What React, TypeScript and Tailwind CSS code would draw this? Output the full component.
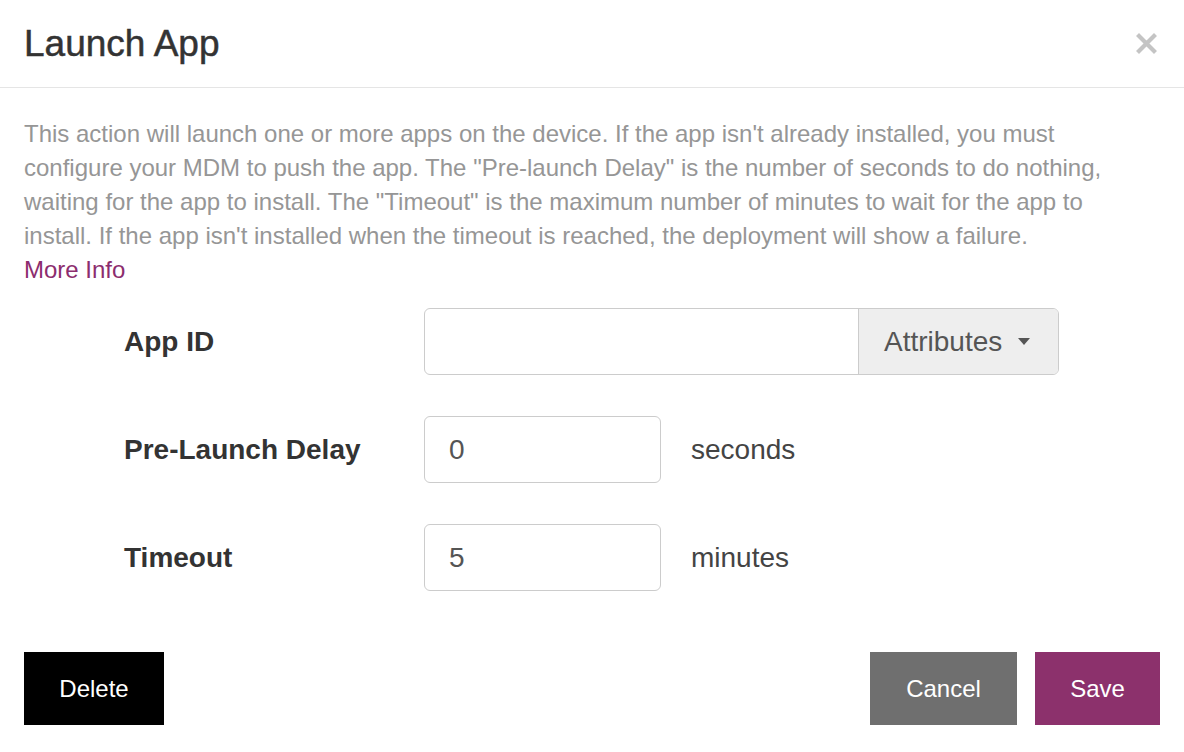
import React from 'react';

export default function App() {
  const font = { fontFamily: '"Liberation Sans", Arial, sans-serif' };

  const rows = [
    { label: 'Pre-Launch Delay', value: '0', unit: 'seconds' },
    { label: 'Timeout', value: '5', unit: 'minutes' },
  ];

  return (
    <div className="w-[1184px] h-[752px] bg-white flex flex-col" style={font}>
      {/* Header */}
      <header className="h-[88px] px-6 flex items-center justify-between border-b border-[#e5e5e5] shrink-0">
        <h1 className="text-[37px] leading-none text-[#333] pb-[1px] [-webkit-text-stroke:0.5px_#333]">Launch App</h1>
        <button className="w-[24px] h-[24px] mr-[2px] flex items-center justify-center">
          <svg width="21" height="21" viewBox="0 0 21 21">
            <path d="M3 3L18 18M18 3L3 18" stroke="#c4c4c4" strokeWidth="4.2" strokeLinecap="square" />
          </svg>
        </button>
      </header>

      {/* Body */}
      <main className="px-6 pt-[29px] flex-1 flex flex-col">
        <p className="text-[24px] leading-[34px] text-[#969696] whitespace-nowrap">
          This action will launch one or more apps on the device. If the app isn't already installed, you must
          <br />
          configure your MDM to push the app. The "Pre-launch Delay" is the number of seconds to do nothing,
          <br />
          waiting for the app to install. The "Timeout" is the maximum number of minutes to wait for the app to
          <br />
          install. If the app isn't installed when the timeout is reached, the deployment will show a failure.
          <br />
          <a className="text-[#8c2d6e]">More Info</a>
        </p>

        <div className="mt-[21px] flex flex-col gap-[41px]">
          <div className="flex items-center">
            <label className="w-[300px] pl-[100px] box-content text-[28px] font-bold text-[#333]">App ID</label>
            <div className="flex w-[635px] h-[67px] border border-[#ccc] rounded-[6px] overflow-hidden">
              <input className="flex-1 min-w-0 px-6 text-[28px] text-[#555] outline-none" style={font} />
              <div className="w-[200px] shrink-0 bg-[#eeeeee] border-l border-[#ccc] flex items-center pl-[25px] text-[28px] text-[#555]">
                Attributes
                <svg className="ml-[16px]" width="12" height="7" viewBox="0 0 12 7">
                  <path d="M0 0H12L6 7Z" fill="#555" />
                </svg>
              </div>
            </div>
          </div>

          {rows.map((row) => (
            <div key={row.label} className="flex items-center">
              <label className="w-[300px] pl-[100px] box-content text-[28px] font-bold text-[#333]">{row.label}</label>
              <input
                readOnly
                value={row.value}
                className="w-[237px] h-[67px] border border-[#ccc] rounded-[6px] px-6 text-[28px] text-[#555] outline-none"
                style={font}
              />
              <span className="ml-[30px] text-[28px] text-[#444]">{row.unit}</span>
            </div>
          ))}
        </div>

        {/* Footer */}
        <div className="mt-[61px] flex items-center justify-between">
          <button className="w-[140px] h-[73px] bg-black text-white text-[24px]">Delete</button>
          <div className="flex gap-[18px]">
            <button className="w-[147px] h-[73px] bg-[#6f6f6f] text-white text-[24px]">Cancel</button>
            <button className="w-[125px] h-[73px] bg-[#8c316c] text-white text-[24px]">Save</button>
          </div>
        </div>
      </main>
    </div>
  );
}
